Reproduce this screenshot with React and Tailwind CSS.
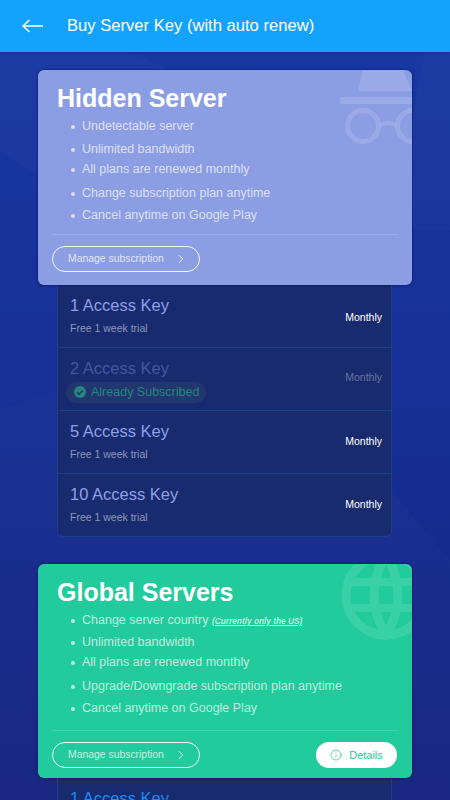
import React from 'react';
import { ChevronRight, Info } from 'lucide-react';

const font = { fontFamily: '"Liberation Sans", Arial, sans-serif' };

const hiddenFeatures = [
  ['Undetectable server', 'mt-0'],
  ['Unlimited bandwidth', 'mt-[8px]'],
  ['All plans are renewed monthly', 'mt-[5px]'],
  ['Change subscription plan anytime', 'mt-[9px]'],
  ['Cancel anytime on Google Play', 'mt-[7px]'],
];

const globalFeatures = [
  [
    <>
      Change server country{' '}
      <span className="text-[8.3px] font-bold italic underline">(Currently only the US)</span>
    </>,
    'mt-0',
  ],
  ['Unlimited bandwidth', 'mt-[6px]'],
  ['All plans are renewed monthly', 'mt-[5px]'],
  ['Upgrade/Downgrade subscription plan anytime', 'mt-[9px]'],
  ['Cancel anytime on Google Play', 'mt-[7px]'],
];

function HatIcon() {
  return (
    <svg width="72" height="76" viewBox="0 0 72 76" className="absolute right-0 top-0" fill="none">
      <path d="M23 0h40l9 21H18z" fill="#fff" fillOpacity="0.13" />
      <rect x="0" y="27" width="72" height="7" fill="#fff" fillOpacity="0.13" />
      <circle cx="23" cy="56" r="15.5" stroke="#fff" strokeOpacity="0.13" strokeWidth="5" />
      <circle cx="73" cy="56" r="15.5" stroke="#fff" strokeOpacity="0.13" strokeWidth="5" />
      <path d="M40 55q8-4 16 0" stroke="#fff" strokeOpacity="0.13" strokeWidth="4" />
    </svg>
  );
}

function GlobeIcon() {
  return (
    <svg width="72" height="76" viewBox="0 0 72 76" className="absolute right-0 top-0" fill="none">
      <g stroke="#fff" strokeWidth="9" opacity="0.1">
        <circle cx="46" cy="31" r="40" />
        <path d="M46-9Q22 31 46 71Q70 31 46-9z" />
        <path d="M10 18h72M10 44h72" strokeWidth="8" />
      </g>
    </svg>
  );
}

function ServerCard({ title, color, features, icon, details, dividerGap, bottomGap }) {
  return (
    <div className={`relative z-10 overflow-hidden rounded-md shadow-[0_0_3px_rgba(0,10,90,0.8)] ${color}`}>
      {icon}
      <div className="pl-[19px] pt-[13px]">
        <h2 className="text-[25px] font-bold leading-[30px] text-white">{title}</h2>
      </div>
      <ul className="mt-[6px] pl-[33px] text-[12.5px] leading-[15px] text-white/70">
        {features.map(([text, gap], i) => (
          <li key={i} className={`relative flex items-center pl-[11px] ${gap}`}>
            <span className="absolute left-0 h-[4px] w-[4px] rounded-full bg-white/70" />
            <span className="whitespace-pre">{text}</span>
          </li>
        ))}
      </ul>
      <div className={`mx-[14px] h-px bg-white/15 ${dividerGap}`} />
      <div className={`flex items-center justify-between pl-[14px] pr-[15px] pt-[11px] ${bottomGap}`}>
        <button className="flex h-[26px] w-[148px] items-center rounded-full border border-white/90 pl-[15px] text-[10.4px] text-white/75">
          Manage subscription
          <ChevronRight className="ml-[10px] h-[14px] w-[14px] text-white" strokeWidth={1.5} />
        </button>
        {details && (
          <button className="flex h-[26px] w-[81px] items-center justify-center gap-[7px] rounded-full bg-white text-[11px] text-[#22cb9b]">
            <Info className="h-[12px] w-[12px]" strokeWidth={1.5} />
            Details
          </button>
        )}
      </div>
    </div>
  );
}

function KeyRow({ name, last, subscribed, monthlyOffset, titleColor = 'text-[#8f9fe8]' }) {
  return (
    <div className={`flex items-center justify-between pr-[9px] ${last ? 'h-[62px]' : 'h-[63px] border-b border-[#1c3f8c]'}`}>
      {subscribed ? (
        <div className="mt-[2px] pl-[12px]">
          <div className="text-[16.5px] leading-[20px] text-[#45569f]">{name}</div>
          <div className="-ml-[4px] mt-[4px] flex h-[21px] w-[140px] items-center gap-[5px] rounded-full bg-[#22366f] pl-[8px] text-[12.5px] text-[#23867f]">
            <svg width="12" height="12" viewBox="0 0 12 12">
              <circle cx="6" cy="6" r="6" fill="#23867f" />
              <path d="M3.2 6.2l2 2 3.6-3.8" stroke="#22366f" strokeWidth="1.6" fill="none" />
            </svg>
            Already Subscribed
          </div>
        </div>
      ) : (
        <div className="-mt-[3px] pl-[12px]">
          <div className={`text-[16.5px] leading-[20px] ${titleColor}`}>{name}</div>
          <div className="mt-[7px] text-[10.5px] leading-[13px] text-[#8d97bd]">Free 1 week trial</div>
        </div>
      )}
      <div className={`text-[10.5px] ${monthlyOffset} ${subscribed ? 'text-[#65749f]' : 'font-medium text-white'}`}>Monthly</div>
    </div>
  );
}

function KeyPanel({ children, open }) {
  return (
    <div className={`ml-[19px] mr-[20px] border-x border-[#1c3f8c] bg-[#172b6e] ${open ? '' : 'rounded-b-md border-b'}`}>
      {children}
    </div>
  );
}

export default function App() {
  return (
    <div
      className="relative h-[800px] w-[450px] overflow-hidden bg-gradient-to-b from-[#173aa5] via-[#172f96] to-[#162480]"
      style={font}
    >
      <svg width="450" height="800" viewBox="0 0 450 800" className="absolute left-0 top-0" fill="none">
        <path d="M0 150L120 230 450 230 450 52 425 52 400 180 130 52 0 52z" fill="#fff" fillOpacity="0.02" />
        <path d="M0 410L60 390 280 360 450 560 450 800 0 800z" fill="#fff" fillOpacity="0.015" />
      </svg>
      <header className="relative z-20 flex h-[52px] items-center bg-[#14a2ff] shadow-[0_1px_2px_rgba(10,40,140,0.6)]">
        <svg width="24" height="14" viewBox="0 0 24 14" className="ml-[21px]" fill="none" stroke="#fff" strokeWidth="1.5">
          <path d="M22 7H2M8.5 1L2 7l6.5 6" />
        </svg>
        <h1 className="ml-[22px] text-[16.6px] text-white">Buy Server Key (with auto renew)</h1>
      </header>

      <main className="relative px-[38px] pt-[18px]">
        <ServerCard
          title="Hidden Server"
          color="bg-[#8b9ee4]"
          features={hiddenFeatures}
          icon={<HatIcon />}
          dividerGap="mt-[11px]"
          bottomGap="pb-[13px]"
        />
        <KeyPanel>
          <KeyRow name="1 Access Key" monthlyOffset="mt-[4px]" />
          <KeyRow name="2 Access Key" subscribed monthlyOffset="-mt-[2px]" />
          <KeyRow name="5 Access Key" monthlyOffset="mt-0" />
          <KeyRow name="10 Access Key" last monthlyOffset="mt-0" />
        </KeyPanel>

        <div className="mt-[27px]">
          <ServerCard
            title="Global Servers"
            color="bg-[#22cb9b]"
            features={globalFeatures}
            icon={<GlobeIcon />}
            details
            dividerGap="mt-[14px]"
            bottomGap="pb-[10px]"
          />
        </div>
        <KeyPanel open>
          <KeyRow name="1 Access Key" titleColor="text-[#1a8cf0]" monthlyOffset="mt-[4px]" />
        </KeyPanel>
      </main>
    </div>
  );
}
